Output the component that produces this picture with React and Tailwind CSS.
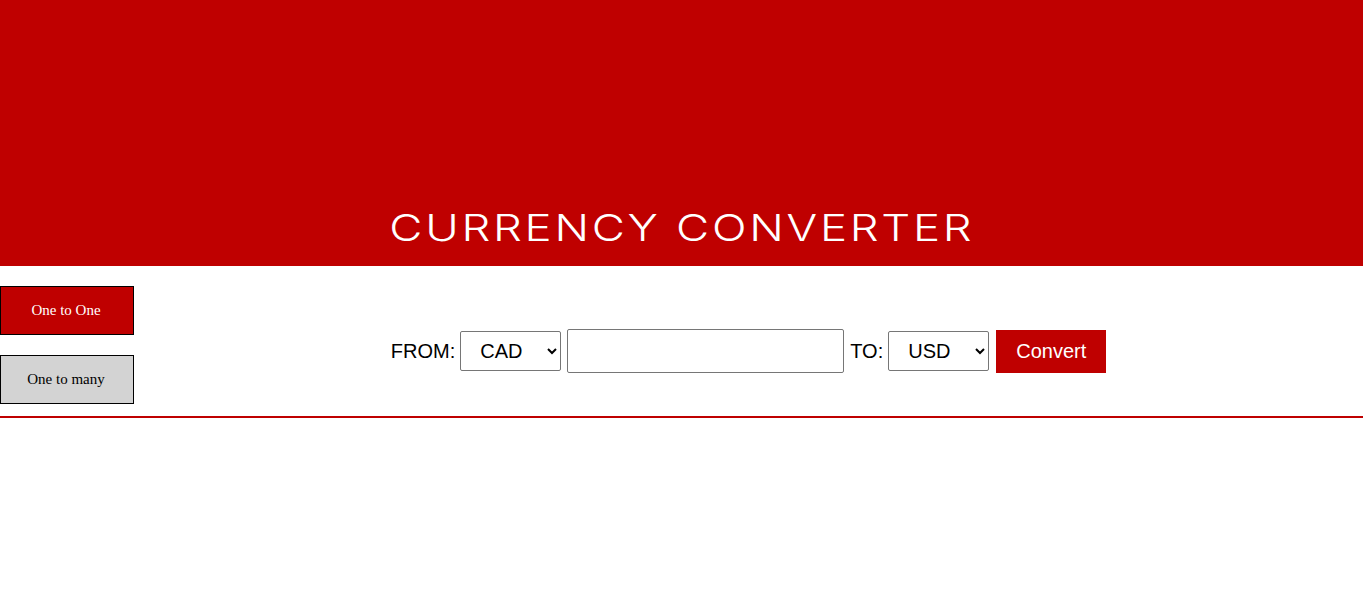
import React, { useState } from "react";

const App = () => {
  const [mode, setMode] = useState("one");

  return (
    <div className="min-h-screen bg-white font-['Liberation_Sans',Arial,sans-serif]">
      {/* Header */}
      <header className="flex h-[266px] items-end justify-center bg-[#bf0000] pb-[20px]">
        <h1 className="scale-x-[1.23] font-['Inter',sans-serif] text-[37px] font-light leading-none tracking-[0.06em] text-white">
          CURRENCY CONVERTER
        </h1>
      </header>

      {/* Main */}
      <div className="flex border-b-2 border-[#bf0000]">
        <div className="flex w-[134px] shrink-0 flex-col gap-5 pt-5 pb-3">
          <button
            onClick={() => setMode("one")}
            className={`h-[49px] w-[134px] border border-black pr-[2px] font-['Liberation_Serif',serif] text-[15px] ${
              mode === "one" ? "bg-[#bf0000] text-white" : "bg-[#d3d3d3] text-black"
            }`}
          >
            One to One
          </button>
          <button
            onClick={() => setMode("many")}
            className={`h-[49px] w-[134px] border border-black pr-[2px] font-['Liberation_Serif',serif] text-[15px] ${
              mode === "many" ? "bg-[#bf0000] text-white" : "bg-[#d3d3d3] text-black"
            }`}
          >
            One to many
          </button>
        </div>

        <div className="flex flex-1 items-center justify-center pt-[20px]">
          <div className="flex items-center text-[20px] text-black">
            <span className="mr-[5px]">FROM:</span>
            <select className="h-[40px] w-[101px] rounded-[2px] border border-[#767676] bg-white pl-[15px] pr-1 text-[20px]">
              <option>CAD</option>
              <option>USD</option>
              <option>EUR</option>
            </select>
            <input
              type="text"
              className="ml-[6px] h-[44px] w-[277px] rounded-[2px] border border-[#767676] px-2 text-[20px]"
            />
            <span className="ml-[6px] mr-[5px]">TO:</span>
            <select className="h-[40px] w-[101px] rounded-[2px] border border-[#767676] bg-white pl-[15px] pr-1 text-[20px]">
              <option>USD</option>
              <option>CAD</option>
              <option>EUR</option>
            </select>
            <button className="ml-[7px] h-[43px] w-[110px] bg-[#bf0000] text-[20px] text-white">
              Convert
            </button>
          </div>
        </div>
      </div>
    </div>
  );
};

export default App;
